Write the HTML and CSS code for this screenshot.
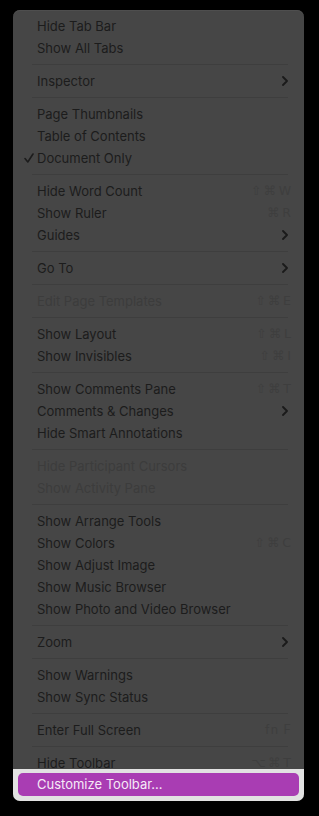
FILE: index.html
```html
<!DOCTYPE html>
<html>
<head>
<meta charset="utf-8">
<link rel="stylesheet" href="styles.css">
</head>
<body>
<div class="stage">
  <div class="menu">
    <div class="dark">
      <div class="row"><span></span><span class="label">Hide Tab Bar</span><span></span></div>
      <div class="row"><span></span><span class="label">Show All Tabs</span><span></span></div>
      <div class="sep"></div>
      <div class="row"><span></span><span class="label">Inspector</span><svg class="chev" viewBox="0 0 6 10"><path d="M1 1 L5 5 L1 9"/></svg></div>
      <div class="sep"></div>
      <div class="row"><span></span><span class="label">Page Thumbnails</span><span></span></div>
      <div class="row"><span></span><span class="label">Table of Contents</span><span></span></div>
      <div class="row"><svg class="check" viewBox="0 0 10 10"><path d="M1 5.6 L3.8 9 L9 1"/></svg><span class="label">Document Only</span><span></span></div>
      <div class="sep"></div>
      <div class="row"><span></span><span class="label">Hide Word Count</span><span class="key">⇧⌘W</span></div>
      <div class="row"><span></span><span class="label">Show Ruler</span><span class="key">⌘R</span></div>
      <div class="row"><span></span><span class="label">Guides</span><svg class="chev" viewBox="0 0 6 10"><path d="M1 1 L5 5 L1 9"/></svg></div>
      <div class="sep"></div>
      <div class="row"><span></span><span class="label">Go To</span><svg class="chev" viewBox="0 0 6 10"><path d="M1 1 L5 5 L1 9"/></svg></div>
      <div class="sep"></div>
      <div class="row disabled"><span></span><span class="label">Edit Page Templates</span><span class="key">⇧⌘E</span></div>
      <div class="sep"></div>
      <div class="row"><span></span><span class="label">Show Layout</span><span class="key">⇧⌘L</span></div>
      <div class="row"><span></span><span class="label">Show Invisibles</span><span class="key">⇧⌘I</span></div>
      <div class="sep"></div>
      <div class="row"><span></span><span class="label">Show Comments Pane</span><span class="key">⇧⌘T</span></div>
      <div class="row"><span></span><span class="label">Comments &amp; Changes</span><svg class="chev" viewBox="0 0 6 10"><path d="M1 1 L5 5 L1 9"/></svg></div>
      <div class="row"><span></span><span class="label">Hide Smart Annotations</span><span></span></div>
      <div class="sep"></div>
      <div class="row disabled"><span></span><span class="label">Hide Participant Cursors</span><span></span></div>
      <div class="row disabled"><span></span><span class="label">Show Activity Pane</span><span></span></div>
      <div class="sep"></div>
      <div class="row"><span></span><span class="label">Show Arrange Tools</span><span></span></div>
      <div class="row"><span></span><span class="label">Show Colors</span><span class="key">⇧⌘C</span></div>
      <div class="row"><span></span><span class="label">Show Adjust Image</span><span></span></div>
      <div class="row"><span></span><span class="label">Show Music Browser</span><span></span></div>
      <div class="row"><span></span><span class="label">Show Photo and Video Browser</span><span></span></div>
      <div class="sep"></div>
      <div class="row"><span></span><span class="label">Zoom</span><svg class="chev" viewBox="0 0 6 10"><path d="M1 1 L5 5 L1 9"/></svg></div>
      <div class="sep"></div>
      <div class="row"><span></span><span class="label">Show Warnings</span><span></span></div>
      <div class="row"><span></span><span class="label">Show Sync Status</span><span></span></div>
      <div class="sep"></div>
      <div class="row"><span></span><span class="label">Enter Full Screen</span><span class="key fn">fn F</span></div>
      <div class="sep"></div>
      <div class="row last"><span></span><span class="label">Hide Toolbar</span><span class="key">⌥⌘T</span></div>
    </div>
    <div class="light">
      <div class="hl">Customize Toolbar…</div>
    </div>
  </div>
</div>
</body>
</html>
```

FILE: styles.css
```css
html, body {
  margin: 0;
  padding: 0;
  background: #000;
}
body {
  width: 319px;
  height: 816px;
  overflow: hidden;
  font-family: Inter, "Noto Sans", "DejaVu Sans", sans-serif;
  font-size: 13px;
}
.stage {
  padding: 10px 0 0 13px;
}
.menu {
  width: 291px;
  height: 791px;
  border-radius: 7px;
  overflow: hidden;
  background: #464646;
  display: flex;
  flex-direction: column;
  box-shadow: inset 0 1px 0 #4e4e4e;
}
.dark {
  padding-top: 5px;
  display: flex;
  flex-direction: column;
  flex: 1;
}
.row {
  display: grid;
  grid-template-columns: 24px 1fr auto;
  align-items: center;
  height: 22px;
  line-height: 22px;
  padding-right: 13px;
  color: #1c1c1c;
}
.row.last {
  height: 17px;
  align-items: start;
}
.row.disabled .label {
  color: #3c3c3c;
}
.check {
  width: 10px;
  height: 10px;
  margin-left: 11px;
  fill: none;
  stroke: #1c1c1c;
  stroke-width: 1.6;
  stroke-linecap: round;
  stroke-linejoin: round;
}
.key {
  color: #3e3e3e;
  font-family: "DejaVu Sans", sans-serif;
  font-size: 12.5px;
  letter-spacing: 2.5px;
  margin-right: -2.5px;
}
.key.fn {
  font-family: Inter, sans-serif;
  letter-spacing: 1px;
  margin-right: -1px;
}
.chev {
  width: 6px;
  height: 10px;
  margin-right: 3px;
  fill: none;
  stroke: #1a1a1a;
  stroke-width: 1.8;
  stroke-linecap: round;
  stroke-linejoin: round;
}
.sep {
  height: 1px;
  margin: 5px 16px 5px 19px;
  background: #3e3e3e;
}
.light {
  background: #e2e2e2;
  padding: 4px 5px 5px 5px;
}
.hl {
  height: 23px;
  line-height: 23px;
  padding-left: 19px;
  border-radius: 5px;
  background: #a93db3;
  color: #f6eaf7;
}
```
